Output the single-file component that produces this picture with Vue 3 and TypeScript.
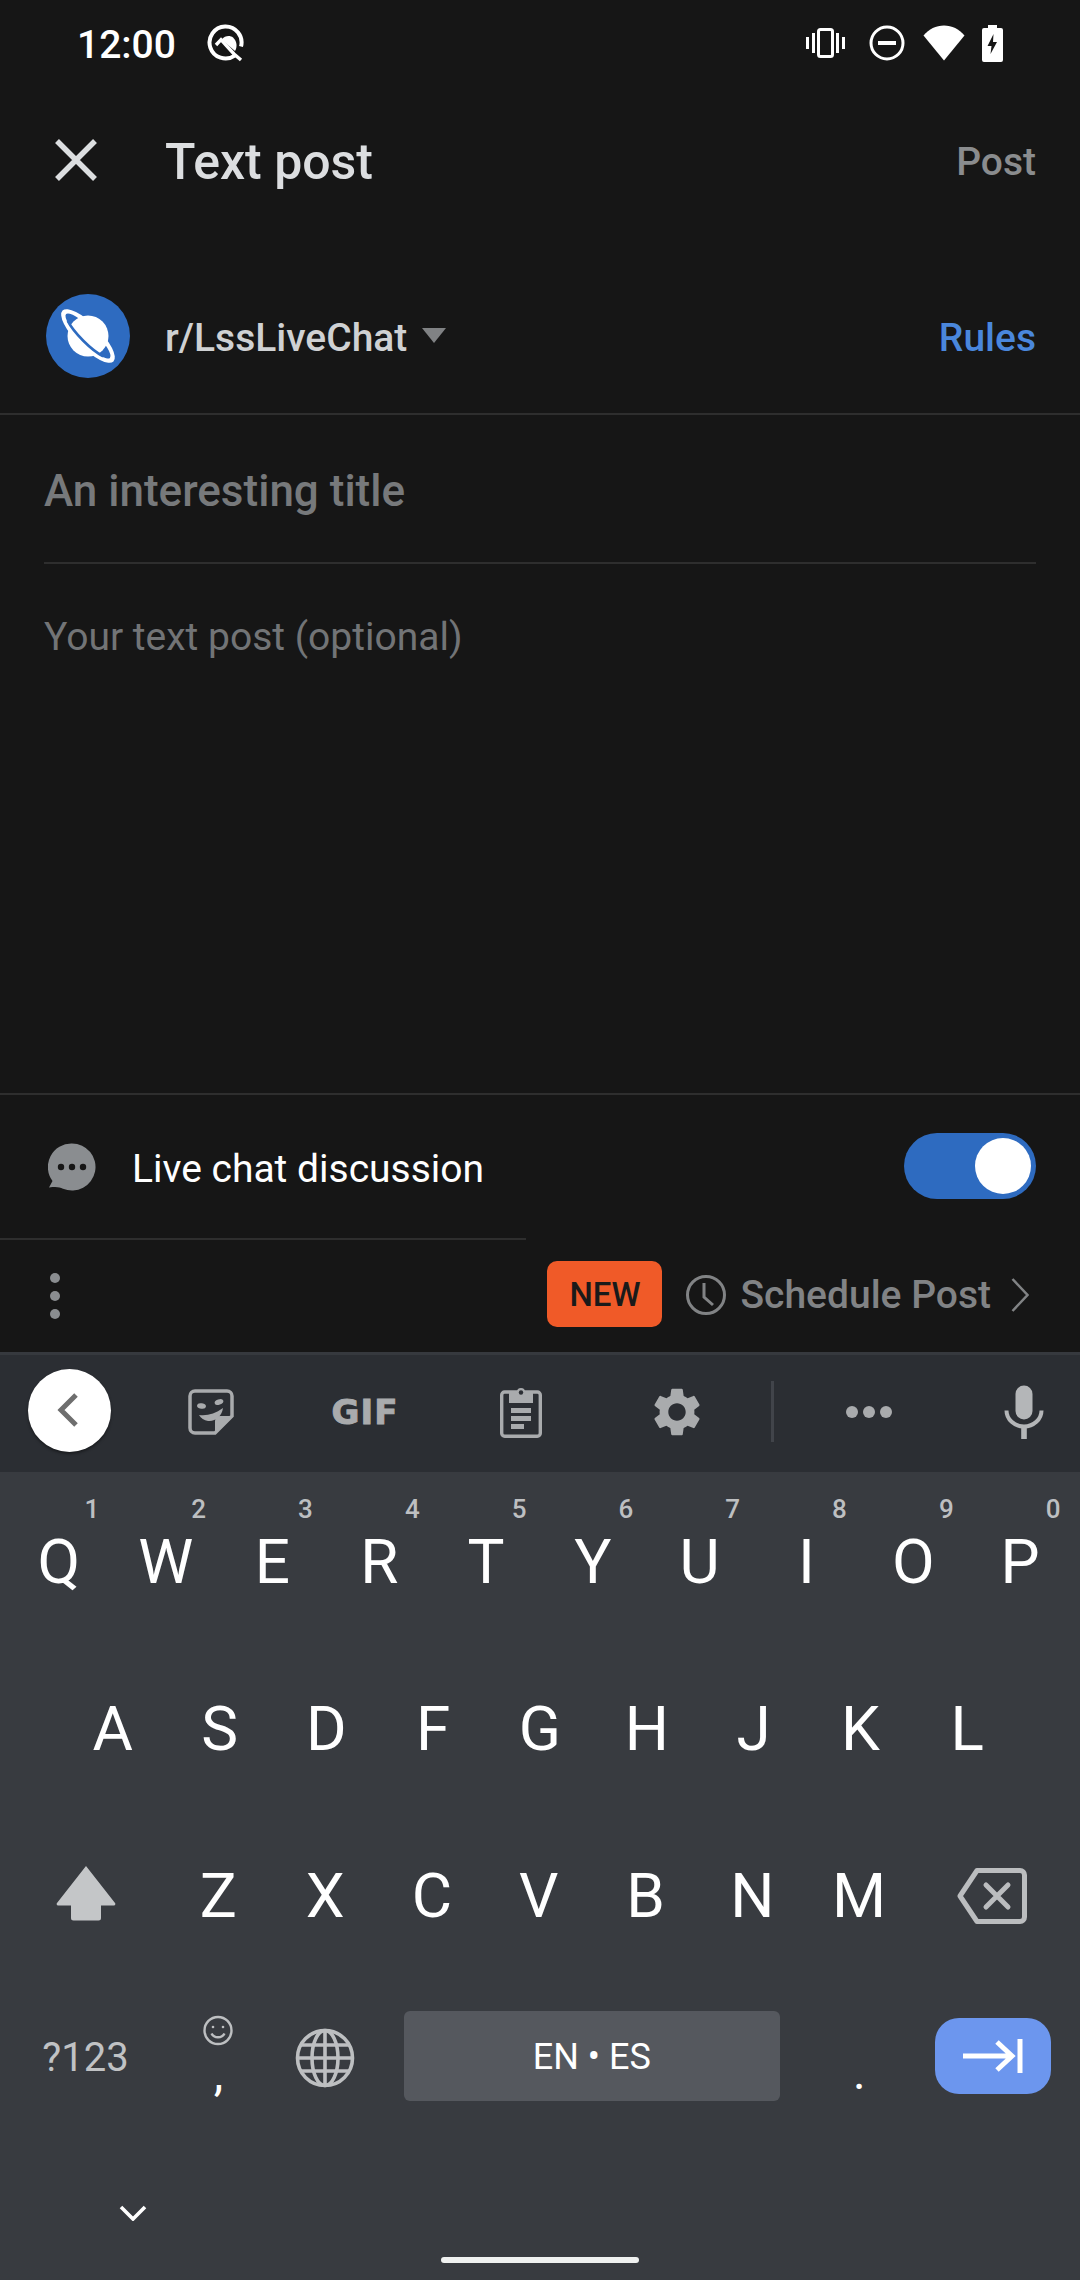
<script setup lang="ts">
interface LetterKey {
  label: string
  hint?: string
}

const topRow: LetterKey[] = [
  { label: 'Q', hint: '1' },
  { label: 'W', hint: '2' },
  { label: 'E', hint: '3' },
  { label: 'R', hint: '4' },
  { label: 'T', hint: '5' },
  { label: 'Y', hint: '6' },
  { label: 'U', hint: '7' },
  { label: 'I', hint: '8' },
  { label: 'O', hint: '9' },
  { label: 'P', hint: '0' },
]
const midRow: LetterKey[] = 'ASDFGHJKL'.split('').map((label) => ({ label }))
const lowRow: LetterKey[] = 'ZXCVBNM'.split('').map((label) => ({ label }))

const gearPath =
  'M19.14,12.94c.04-.3.06-.61.06-.94 0-.32-.02-.64-.07-.94l2.03-1.58c.18-.14.23-.41.12-.61l-1.92-3.32c-.12-.22-.37-.29-.59-.22l-2.39.96c-.5-.38-1.03-.7-1.62-.94l-.36-2.54c-.04-.24-.24-.41-.48-.41h-3.84c-.24 0-.43.17-.47.41l-.36 2.54c-.59.24-1.13.57-1.62.94l-2.39-.96c-.22-.08-.47 0-.59.22L2.74 8.87c-.12.21-.08.47.12.61l2.03 1.58c-.05.3-.09.63-.09.94s.02.64.07.94l-2.03 1.58c-.18.14-.23.41-.12.61l1.92 3.32c.12.22.37.29.59.22l2.39-.96c.5.38 1.03.7 1.62.94l.36 2.54c.05.24.24.41.48.41h3.84c.24 0 .44-.17.47-.41l.36-2.54c.59-.24 1.13-.56 1.62-.94l2.39.96c.22.08.47 0 .59-.22l1.92-3.32c.12-.22.07-.47-.12-.61l-2.01-1.58zM12 15.6c-1.98 0-3.6-1.62-3.6-3.6s1.62-3.6 3.6-3.6 3.6 1.62 3.6 3.6-1.62 3.6-3.6 3.6z'
</script>

<template>
  <div class="screen">
    <div class="status-bar">
      <span class="clock">12:00</span>
      <svg class="q-badge" width="40" height="40" viewBox="0 0 40 40" fill="none" stroke="#fff">
        <path d="M29.7 32.600A16 16 0 1 1 36 23.600" stroke-width="4" />
        <path d="M11 22l5-5.300L29 31l7 6" stroke-width="3.400" />
        <path d="M16.500 16.500C20 12.500 25 12 28 14.500c4 3.500 4.500 9.500 2 13.500z" fill="#fff" stroke="none" />
      </svg>
      <div class="status-icons">
        <svg width="39" height="30" viewBox="0 0 39 30" fill="#fff">
          <rect x="0" y="9" width="3" height="12" />
          <rect x="6" y="5" width="3" height="20" />
          <rect x="30" y="5" width="3" height="20" />
          <rect x="36" y="9" width="3" height="12" />
          <rect x="12.5" y="1.5" width="14" height="27" rx="2" fill="none" stroke="#fff" stroke-width="3" />
        </svg>
        <svg width="36" height="36" viewBox="0 0 36 36" fill="none">
          <circle cx="18" cy="18" r="16" stroke="#fff" stroke-width="3" />
          <rect x="9" y="16" width="18" height="4" fill="#fff" />
        </svg>
        <svg width="42" height="36" viewBox="0 0 42 36" fill="#fff">
          <path d="M0.5 10.5C6 4 13 0.5 21 0.5S36 4 41.5 10.5L21 35.5z" />
        </svg>
        <svg width="21" height="37" viewBox="0 0 21 37" fill="#fff">
          <path d="M6 0h9v3h4a2 2 0 0 1 2 2v30a2 2 0 0 1-2 2H2a2 2 0 0 1-2-2V5a2 2 0 0 1 2-2h4z" />
          <path d="M11.5 9L5.5 21h4l-1 8 6.5-12h-4z" fill="#161616" />
        </svg>
      </div>
    </div>

    <header class="toolbar">
      <svg class="close-icon" width="42" height="42" viewBox="0 0 42 42" stroke="#dcdee0" stroke-width="5.5">
        <path d="M2 2l38 38M40 2L2 40" />
      </svg>
      <span class="toolbar-title">Text post</span>
      <span class="post-btn">Post</span>
    </header>

    <section class="community-row">
      <svg class="avatar" width="84" height="84" viewBox="0 0 84 84">
        <circle cx="42" cy="42" r="42" fill="#2e6bc0" />
        <g transform="rotate(45 42 42)">
          <ellipse cx="42" cy="42" rx="36" ry="12" fill="#fff" />
          <ellipse cx="42" cy="42" rx="31" ry="7.5" fill="#2e6bc0" />
        </g>
        <circle cx="42" cy="42" r="20.5" fill="#fff" />
        <g transform="translate(42 42) rotate(45)">
          <path d="M-25 3.6A31 7.5 0 0 0 25 3.6" fill="none" stroke="#2e6bc0" stroke-width="2.6" />
        </g>
      </svg>
      <span class="community-name">r/LssLiveChat</span>
      <span class="caret"></span>
      <span class="rules-btn">Rules</span>
    </section>

    <div class="title-field">An interesting title</div>
    <div class="body-field">Your text post (optional)</div>

    <section class="live-row">
      <svg width="48" height="48" viewBox="0 0 48 48">
        <path d="M24 0.500a23.500 23.500 0 1 1-9 45.200c-3.500-1.400-6-2.300-14-1.200l3.500-6.500A23.500 23.500 0 0 1 24 0.500z" fill="#8a8d90" />
        <circle cx="13" cy="24" r="3.200" fill="#161616" />
        <circle cx="24" cy="24" r="3.200" fill="#161616" />
        <circle cx="35" cy="24" r="3.200" fill="#161616" />
      </svg>
      <span class="live-label">Live chat discussion</span>
      <div class="toggle"><span class="toggle-knob"></span></div>
    </section>

    <div class="short-rule"></div>

    <section class="action-row">
      <div class="more-dots"><i></i><i></i><i></i></div>
      <span class="new-badge">NEW</span>
      <svg class="clock-icon" width="42" height="42" viewBox="0 0 42 42" fill="none" stroke="#818385" stroke-width="3">
        <circle cx="21" cy="21" r="18.500" />
        <path d="M19 9v14l9 8" />
      </svg>
      <span class="schedule-label">Schedule Post</span>
      <svg class="chevron-right" width="18" height="34" viewBox="0 0 18 34" fill="none" stroke="#818385" stroke-width="2.500">
        <path d="M1.500 1l15 16-15 16" />
      </svg>
    </section>

    <div class="keyboard">
      <div class="strip">
        <div class="strip-cell back-cell">
          <span class="back-btn">
            <svg width="22" height="34" viewBox="0 0 22 34" fill="none" stroke="#6e6e6e" stroke-width="5">
              <path d="M19 2L4 17l15 15" />
            </svg>
          </span>
        </div>
        <div class="strip-cell sticker-cell">
          <svg width="46" height="46" viewBox="0 0 46 46" fill="none">
            <path d="M7 2h32a5 5 0 0 1 5 5v20L27 44H7a5 5 0 0 1-5-5V7a5 5 0 0 1 5-5z" stroke="#a9abad" stroke-width="3.500" />
            <path d="M44 27h-12a5 5 0 0 0-5 5v12z" fill="#a9abad" />
            <ellipse cx="13.500" cy="17" rx="4.500" ry="2.700" fill="#a9abad" transform="rotate(10 13.500 17)" />
            <ellipse cx="31" cy="13" rx="4.500" ry="2.700" fill="#a9abad" transform="rotate(-20 31 13)" />
            <path d="M11 26c8 1 16-1 24-7-1 8-8 14-15 13-4-.5-7-3-9-6z" fill="#a9abad" />
          </svg>
        </div>
        <div class="strip-cell gif-cell"><span class="gif-label">GIF</span></div>
        <div class="strip-cell clip-cell">
          <svg width="42" height="52" viewBox="0 0 42 52" fill="none">
            <rect x="1.700" y="6" width="38.600" height="44.300" rx="3" stroke="#a9abad" stroke-width="3.400" />
            <path d="M9 6h8a4 4 0 0 1 8 0h8v11H9z" fill="#a9abad" />
            <circle cx="21" cy="6.500" r="2.200" fill="#2b2e33" />
            <rect x="11" y="22" width="20" height="5" fill="#a9abad" />
            <rect x="11" y="30" width="20" height="5" fill="#a9abad" />
            <rect x="11" y="38" width="13" height="5" fill="#a9abad" />
          </svg>
        </div>
        <div class="strip-cell gear-cell">
          <svg width="58" height="58" viewBox="0 0 24 24" fill="#a9abad"><path :d="gearPath" /></svg>
        </div>
        <div class="strip-rule"></div>
        <div class="strip-cell dots-cell"><i></i><i></i><i></i></div>
        <div class="strip-cell mic-cell">
          <svg width="40" height="54" viewBox="0 0 40 54" fill="none">
            <rect x="11.500" y="0.500" width="17" height="34" rx="8.500" fill="#b4b6b8" />
            <path d="M2.500 25.500a17.500 16 0 0 0 35 0" stroke="#b4b6b8" stroke-width="4" />
            <rect x="17.200" y="40" width="5.600" height="14" fill="#b4b6b8" />
          </svg>
        </div>
      </div>

      <div class="key-row top-row">
        <div v-for="key in topRow" :key="key.label" class="key">
          {{ key.label }}<span class="hint">{{ key.hint }}</span>
        </div>
      </div>
      <div class="key-row mid-row">
        <div v-for="key in midRow" :key="key.label" class="key">{{ key.label }}</div>
      </div>
      <div class="key-row low-row">
        <div class="key wide-key shift-key">
          <svg width="60" height="56" viewBox="0 0 60 56" fill="#c4c6c8">
            <path d="M30 1L59 38a1.500 1.500 0 0 1-1 2.500H45V53a2.500 2.500 0 0 1-2.500 2.500h-25A2.500 2.500 0 0 1 15 53V40.500H2A1.500 1.500 0 0 1 1 38z" />
          </svg>
        </div>
        <div v-for="key in lowRow" :key="key.label" class="key">{{ key.label }}</div>
        <div class="key wide-key">
          <svg width="70" height="56" viewBox="0 0 70 56" fill="none" stroke="#bbbdbf">
            <path d="M20 2.500h43a4.500 4.500 0 0 1 4.500 4.500v42a4.500 4.500 0 0 1-4.500 4.500H20L3 28z" stroke-width="5" stroke-linejoin="round" />
            <path d="M29 17l22 22M51 17L29 39" stroke-width="5" stroke-linecap="round" />
          </svg>
        </div>
      </div>
      <div class="key-row bottom-row">
        <div class="key wide-key symbols-key">?123</div>
        <div class="key comma-key">
          <svg width="30" height="31" viewBox="0 0 30 31" fill="none" stroke="#bdbfc1" stroke-width="2.400">
            <circle cx="15" cy="15.500" r="13.500" />
            <circle cx="10" cy="12" r="1.300" fill="#bdbfc1" stroke="none" />
            <circle cx="20" cy="12" r="1.300" fill="#bdbfc1" stroke="none" />
            <path d="M8.500 18.500c2.500 5 10.500 5 13 0" />
          </svg>
          <span class="comma">,</span>
        </div>
        <div class="key globe-key">
          <svg width="60" height="60" viewBox="0 0 60 60" fill="none" stroke="#bdbfc1" stroke-width="3.600">
            <circle cx="30" cy="30" r="27.500" />
            <ellipse cx="30" cy="30" rx="13" ry="27.500" />
            <path d="M30 2.500v55M6 17h48M2.500 30h55M6 43h48" />
          </svg>
        </div>
        <div class="space-slot"><div class="space-bar">EN • ES</div></div>
        <div class="key period-key">.</div>
        <div class="key wide-key">
          <span class="enter-btn">
            <svg width="60" height="34" viewBox="0 0 60 34" fill="none" stroke="#fff" stroke-width="5">
              <path d="M0 17h50M34 3l15 14-15 14" />
              <path d="M57 0v34" />
            </svg>
          </span>
        </div>
      </div>

      <div class="nav-area">
        <svg class="hide-chevron" width="28" height="16" viewBox="0 0 28 16" fill="none" stroke="#fff" stroke-width="3.600">
          <path d="M2 2l12 12L26 2" />
        </svg>
        <div class="home-pill"></div>
      </div>
    </div>
  </div>
</template>

<style>
html,
body {
  background: #161616;
}
</style>

<style scoped>
.screen {
  width: 1080px;
  height: 2280px;
  overflow: hidden;
  background: #161616;
  font-family: Roboto, "Liberation Sans", sans-serif;
  display: flex;
  flex-direction: column;
}

.status-bar {
  height: 90px;
  flex: none;
  display: flex;
  align-items: center;
  padding: 0 77px 0 77px;
  color: #fff;
}

.clock {
  font-size: 39px;
  font-weight: 500;
  width: 128px;
}

.q-badge {
  margin-top: -4px;
}

.status-icons {
  margin-left: auto;
  display: flex;
  align-items: center;
  margin-top: -4px;
}

.status-icons svg:nth-child(1) {
  margin-right: 24px;
}

.status-icons svg:nth-child(2) {
  margin-right: 18px;
}

.status-icons svg:nth-child(3) {
  margin-right: 17px;
}

.toolbar {
  height: 146px;
  flex: none;
  box-sizing: border-box;
  padding: 0 44px 2px 55px;
  display: flex;
  align-items: center;
}

.close-icon {
  margin-top: -4px;
}

.toolbar-title {
  margin-left: 68px;
  font-size: 50px;
  font-weight: 500;
  color: #dcdee0;
}

.post-btn {
  margin-left: auto;
  font-size: 39px;
  font-weight: 500;
  color: #8a8c8e;
}

.community-row {
  height: 179px;
  flex: none;
  display: flex;
  align-items: center;
  padding: 22px 44px 0 46px;
  border-bottom: 2px solid #2e2e2e;
  box-sizing: border-box;
}

.community-name {
  margin: 4px 0 0 35px;
  font-size: 39px;
  font-weight: 500;
  color: #cfd1d3;
}

.caret {
  margin-left: 15px;
  margin-top: 0;
  border-left: 12px solid transparent;
  border-right: 12px solid transparent;
  border-top: 15px solid #808284;
}

.rules-btn {
  margin: 4px 0 0 auto;
  font-size: 39px;
  font-weight: 500;
  color: #4a87dc;
}

.title-field {
  margin: 0 44px;
  height: 149px;
  flex: none;
  box-sizing: border-box;
  padding-top: 30px;
  line-height: 92px;
  font-size: 44px;
  font-weight: 500;
  color: #77797b;
  border-bottom: 2px solid #2e2e2e;
}

.body-field {
  height: 529px;
  flex: none;
  padding: 48px 44px 0;
  box-sizing: border-box;
  line-height: 50px;
  font-size: 39px;
  color: #727476;
}

.live-row {
  height: 145px;
  flex: none;
  box-sizing: border-box;
  border-top: 2px solid #2e2e2e;
  display: flex;
  align-items: center;
  padding: 0 44px 0 48px;
}

.live-label {
  margin: 5px 0 0 36px;
  font-size: 39px;
  color: #fff;
}

.toggle {
  margin-left: auto;
  margin-top: -2px;
  width: 132px;
  height: 66px;
  border-radius: 33px;
  background: #2e6bc0;
  display: flex;
  align-items: center;
  justify-content: flex-end;
  padding-right: 5px;
  box-sizing: border-box;
}

.toggle-knob {
  width: 56px;
  height: 56px;
  border-radius: 50%;
  background: #fff;
}

.short-rule {
  width: 526px;
  height: 2px;
  flex: none;
  background: #2e2e2e;
}

.action-row {
  height: 112px;
  flex: none;
  display: flex;
  align-items: center;
  padding: 0 51px 0 50px;
}

.more-dots {
  display: flex;
  flex-direction: column;
  gap: 8px;
}

.more-dots i {
  width: 10px;
  height: 10px;
  border-radius: 50%;
  background: #8a8d90;
}

.new-badge {
  margin: -4px 0 0 auto;
  width: 115px;
  height: 66px;
  border-radius: 10px;
  background: #f05a28;
  color: #1a1a1a;
  font-size: 33px;
  font-weight: 500;
  display: flex;
  align-items: center;
  justify-content: center;
}

.clock-icon {
  margin: -2px 0 0 23px;
}

.schedule-label {
  margin: -3px 0 0 13px;
  font-size: 39px;
  font-weight: 500;
  color: #818385;
}

.chevron-right {
  margin: -2px 0 0 20px;
}

.keyboard {
  flex: 1;
  background: #383b40;
  display: flex;
  flex-direction: column;
}

.strip {
  height: 120px;
  flex: none;
  box-sizing: border-box;
  border-top: 3px solid #36393e;
  padding-bottom: 4px;
  background: #2b2e33;
  display: flex;
  align-items: center;
  margin-bottom: 6px;
}

.strip-cell {
  height: 100%;
  display: flex;
  align-items: center;
  justify-content: center;
}

.back-cell {
  width: 139px;
}

.back-btn {
  width: 83px;
  height: 83px;
  margin-top: -3px;
  border-radius: 50%;
  background: #fff;
  box-shadow: 0 2px 3px rgba(0, 0, 0, 0.4);
  display: flex;
  align-items: center;
  justify-content: center;
  padding-right: 4px;
  box-sizing: border-box;
}

.sticker-cell {
  width: 144px;
}

.gif-cell {
  width: 164px;
}

.gif-label {
  font-family: "DejaVu Sans", sans-serif;
  font-weight: 700;
  font-size: 34px;
  letter-spacing: 1px;
  color: #a9abad;
  -webkit-text-stroke: 1px #a9abad;
}

.clip-cell {
  width: 148px;
}

.gear-cell {
  width: 164px;
}

.strip-rule {
  width: 3px;
  height: 61px;
  margin: 0 3px 0 12px;
  background: #41444a;
}

.dots-cell {
  width: 184px;
  margin-right: 14px;
  gap: 5px;
}

.dots-cell i {
  width: 12px;
  height: 12px;
  border-radius: 50%;
  background: #a9abad;
}

.mic-cell {
  flex: 1;
  padding-right: 7px;
}

.key-row {
  display: flex;
  height: 167px;
  flex: none;
  padding-left: 6px;
}

.top-row {
  padding-left: 5.5px;
}

.mid-row {
  padding-left: 59.4px;
}

.bottom-row {
  height: 157px;
}

.key {
  position: relative;
  width: 106.8px;
  flex: none;
  display: flex;
  align-items: center;
  justify-content: center;
  font-size: 62px;
  color: #fff;
}

.hint {
  position: absolute;
  top: 16px;
  left: 79px;
  font-size: 26px;
  font-weight: 500;
  line-height: 30px;
  color: #bdbfc1;
}

.wide-key {
  width: 159px;
}

.shift-key svg {
  margin-top: -6px;
}

.symbols-key {
  font-size: 40px;
  color: #c0c2c4;
}

.comma-key {
  flex-direction: column;
  justify-content: flex-start;
  padding-top: 36px;
  box-sizing: border-box;
}

.comma {
  font-size: 48px;
  line-height: 48px;
  color: #fff;
  margin-top: 4px;
}

.globe-key {
  width: 107px;
}

.space-slot {
  width: 426px;
  flex: none;
  display: flex;
  align-items: center;
  justify-content: center;
}

.space-bar {
  width: 376px;
  height: 90px;
  margin-top: -3px;
  border-radius: 6px;
  background: #55585e;
  color: #fff;
  font-size: 36px;
  padding-top: 2px;
  box-sizing: border-box;
  display: flex;
  align-items: center;
  justify-content: center;
}

.period-key {
  align-items: flex-start;
  font-size: 48px;
  line-height: 48px;
  padding-top: 70px;
  box-sizing: border-box;
  width: 109px;
}

.enter-btn {
  width: 116px;
  height: 76px;
  margin-top: -4px;
  border-radius: 24px;
  background: #6c96ee;
  display: flex;
  align-items: center;
  justify-content: center;
}

.nav-area {
  flex: 1;
  display: flex;
  flex-direction: column;
  align-items: center;
}

.hide-chevron {
  margin: 69px 0 0 -814px;
}

.home-pill {
  width: 198px;
  height: 6px;
  margin-top: 36px;
  border-radius: 3px;
  background: #eff1f0;
}
</style>
